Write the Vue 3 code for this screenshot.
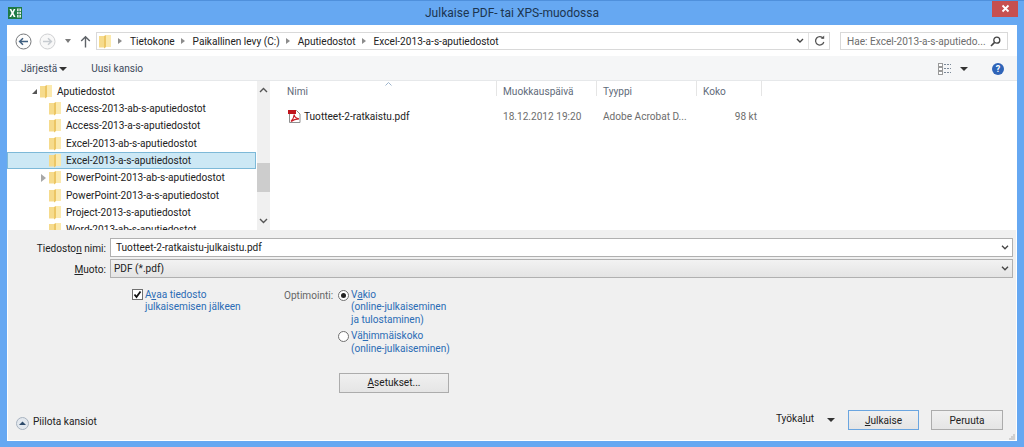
<template>
  <div class="window">
    <header class="titlebar">
      <svg class="app-icon" width="14" height="12" viewBox="0 0 14 12">
        <rect x="0" y="0" width="14" height="12" fill="#1f7a45" />
        <rect x="9" y="1.5" width="4" height="9" fill="#d8eadf" />
        <path d="M9 4.5h4M9 7.5h4M11 1.5v9" stroke="#1f7a45" stroke-width="0.8" />
        <path d="M1.5 2h1.8l1.2 2.4L5.7 2h1.7L5.5 5.900l2 4.100H5.700L4.400 7.500 3.100 10H1.400l2.100-4.100z" fill="#fff" />
      </svg>
      <span class="title">Julkaise PDF- tai XPS-muodossa</span>
      <button class="close">
        <svg width="9" height="9" viewBox="0 0 9 9"><path d="M1.5 1.5l6 6M7.5 1.5l-6 6" stroke="#fff" stroke-width="1.8" /></svg>
      </button>
    </header>

    <div class="body">
      <nav class="navbar">
        <svg class="nav-btn" width="17" height="17" viewBox="0 0 17 17">
          <circle cx="8.5" cy="8.5" r="7.5" fill="#fdfdfd" stroke="#77797c" />
          <path d="M13 8.5H5M8 5.2L4.6 8.5 8 11.8" fill="none" stroke="#3f5f80" stroke-width="1.5" />
        </svg>
        <svg class="nav-btn" width="17" height="17" viewBox="0 0 17 17">
          <circle cx="8.5" cy="8.5" r="7.5" fill="#f8f8f8" stroke="#cfd0d2" />
          <path d="M4 8.5h8M9 5.2l3.4 3.3L9 11.8" fill="none" stroke="#c6cbd0" stroke-width="1.5" />
        </svg>
        <span class="tri small nav-tri"></span>
        <svg class="up" width="11" height="13" viewBox="0 0 11 13">
          <path d="M5.5 12.5V2M1.2 6l4.3-4.3L9.8 6" fill="none" stroke="#5f6368" stroke-width="1.4" />
        </svg>
        <div class="address">
          <svg class="folder addr-folder" width="12" height="15" viewBox="0 0 12 15">
            <path d="M0 2h5v11.5H0z" fill="#f6db8c" />
            <path d="M5 2l2-1v12l-2 1.5z" fill="#ecc665" />
            <path d="M7 1h5v12H7z" fill="#fbe9ad" />
          </svg>
          <template v-for="c in crumbs" :key="c">
            <span class="crumb-arrow"></span>
            <span class="crumb">{{ c }}</span>
          </template>
          <svg class="addr-drop" width="8" height="6" viewBox="0 0 8 6"><path d="M1 1l3 3 3-3" fill="none" stroke="#444" stroke-width="1.4" /></svg>
          <span class="addr-refresh">
            <svg width="11" height="12" viewBox="0 0 11 12">
              <path d="M9.2 3.4A4.2 4.2 0 1 0 9.8 7" fill="none" stroke="#555" stroke-width="1.3" />
              <path d="M6.8 3.8h3.4V0.6z" fill="#555" />
            </svg>
          </span>
        </div>
        <div class="search">
          <span class="search-text">Hae: Excel-2013-a-s-aputiedo...</span>
          <svg width="11" height="11" viewBox="0 0 11 11">
            <circle cx="6.8" cy="4.2" r="3" fill="none" stroke="#444" stroke-width="1.3" />
            <path d="M4.6 6.4L1 10" stroke="#444" stroke-width="1.6" />
          </svg>
        </div>
      </nav>

      <div class="toolbar">
        <span class="tool">Järjestä</span>
        <span class="tri"></span>
        <span class="tool new-folder">Uusi kansio</span>
        <span class="spacer"></span>
        <svg class="views" width="13" height="12" viewBox="0 0 13 12">
          <rect x="0.5" y="0.5" width="4" height="3" fill="#fff" stroke="#9a9a9a" />
          <rect x="0.5" y="4.5" width="4" height="3" fill="#fff" stroke="#9a9a9a" />
          <rect x="0.5" y="8.5" width="4" height="3" fill="#fff" stroke="#9a9a9a" />
          <path d="M6 1.5h7M6 5.5h7M6 9.5h7" stroke="#7d8a99" stroke-dasharray="2 1" />
        </svg>
        <span class="tri views-tri"></span>
        <span class="help">?</span>
      </div>

      <div class="browser">
        <div class="tree">
          <div class="tree-rows">
            <div v-for="row in rows" :key="row.name" :class="['tree-row', { selected: row.selected, root: row.root }]">
              <span v-if="row.root" class="expanded"></span>
              <span v-if="row.closed" class="collapsed"></span>
              <svg class="folder" width="12" height="15" viewBox="0 0 12 15">
                <path d="M0 2h5v11.5H0z" fill="#f6db8c" />
                <path d="M5 2l2-1v12l-2 1.5z" fill="#ecc665" />
                <path d="M7 1h5v12H7z" fill="#fbe9ad" />
              </svg>
              <span class="tree-label">{{ row.name }}</span>
            </div>
          </div>
        </div>
        <div class="scrollbar">
          <svg width="9" height="6" viewBox="0 0 9 6"><path d="M1 5l3.5-3.5L8 5" fill="none" stroke="#555" stroke-width="1.4" /></svg>
          <div class="track"><div class="thumb"></div></div>
          <svg width="9" height="6" viewBox="0 0 9 6"><path d="M1 1l3.5 3.5L8 1" fill="none" stroke="#555" stroke-width="1.4" /></svg>
        </div>
        <div class="files">
          <div class="file-head">
            <span class="col first">Nimi<svg class="sort" width="7" height="4" viewBox="0 0 7 4"><path d="M0.5 3.5l3-3 3 3" fill="none" stroke="#9db4cc" /></svg></span>
            <span class="col">Muokkauspäivä</span>
            <span class="col">Tyyppi</span>
            <span class="col">Koko</span>
          </div>
          <div class="file-row">
            <span class="file-name">
              <svg class="pdf" width="13" height="13" viewBox="0 0 13 13">
                <path d="M1.5 0.5h7l3.5 3.5v8.5H1.5z" fill="#fff" stroke="#8f8f8f" />
                <rect x="0" y="0" width="8" height="4" fill="#c0141d" />
                <path d="M3 11.5c2-2 3-4 3.2-7 .2 2.500 2 4 4.800 4.300-3.200 0-5.800.8-8 2.700z" fill="none" stroke="#c8202a" stroke-width="1.2" />
              </svg>
              Tuotteet-2-ratkaistu.pdf
            </span>
            <span class="meta">18.12.2012 19:20</span>
            <span class="meta">Adobe Acrobat D...</span>
            <span class="meta size">98 kt</span>
          </div>
        </div>
      </div>

      <div class="form">
        <div class="field">
          <label>Tiedosto<u>n</u> nimi:</label>
          <div class="input">Tuotteet-2-ratkaistu-julkaistu.pdf
            <svg class="chev" width="8" height="5" viewBox="0 0 8 5"><path d="M1 0.8l3 3 3-3" fill="none" stroke="#444" stroke-width="1.3" /></svg>
          </div>
        </div>
        <div class="field">
          <label><u>M</u>uoto:</label>
          <div class="input select">PDF (*.pdf)
            <svg class="chev" width="8" height="5" viewBox="0 0 8 5"><path d="M1 0.8l3 3 3-3" fill="none" stroke="#444" stroke-width="1.3" /></svg>
          </div>
        </div>

        <div class="options">
          <div class="open-after">
            <span class="checkbox">
              <svg width="9" height="9" viewBox="0 0 9 9"><path d="M1.5 4.5l2 2.5L7.500 1.500" fill="none" stroke="#111" stroke-width="1.8" /></svg>
            </span>
            <span class="blue">A<u>v</u>aa tiedosto<br />julkaisemisen jälkeen</span>
          </div>
          <div class="optimize">
            <span class="opt-label">Optimointi:</span>
            <div class="opt-col">
              <div class="radio-line">
                <span class="radio on"></span>
                <span class="blue">V<u>a</u>kio<br />(online-julkaiseminen<br />ja tulostaminen)</span>
              </div>
              <div class="radio-line second">
                <span class="radio"></span>
                <span class="blue">Vä<u>h</u>immäiskoko<br />(online-julkaiseminen)</span>
              </div>
              <button class="btn settings"><u>A</u>setukset...</button>
            </div>
          </div>
        </div>

        <div class="footer">
          <svg class="hide-icon" width="13" height="13" viewBox="0 0 13 13">
            <circle cx="6.5" cy="6.5" r="6" fill="#e3e8ee" stroke="#a7b2bf" />
            <path d="M3 8l3.5-3.5L10 8z" fill="#2d4a6a" />
          </svg>
          <span class="hide-label">Piilota kansiot</span>
          <span class="spacer"></span>
          <span class="tools">Työka<u>l</u>ut</span>
          <span class="tri tools-tri"></span>
          <button class="btn primary"><u>J</u>ulkaise</button>
          <button class="btn cancel">Peruuta</button>
          <svg class="grip" width="6" height="6" viewBox="0 0 6 6">
            <path d="M4 0h2v2H4zM2 2h2v2H2zM4 2h2v2H4zM0 4h2v2H0zM2 4h2v2H2zM4 4h2v2H4z" fill="#c2c2c2" fill-opacity="0.7" />
          </svg>
        </div>
      </div>
    </div>
  </div>
</template>

<script setup>
const crumbs = ['Tietokone', 'Paikallinen levy (C:)', 'Aputiedostot', 'Excel-2013-a-s-aputiedostot']

const rows = [
  { name: 'Aputiedostot', root: true },
  { name: 'Access-2013-ab-s-aputiedostot' },
  { name: 'Access-2013-a-s-aputiedostot' },
  { name: 'Excel-2013-ab-s-aputiedostot' },
  { name: 'Excel-2013-a-s-aputiedostot', selected: true },
  { name: 'PowerPoint-2013-ab-s-aputiedostot', closed: true },
  { name: 'PowerPoint-2013-a-s-aputiedostot' },
  { name: 'Project-2013-s-aputiedostot' },
  { name: 'Word-2013-ab-s-aputiedostot' }
]
</script>

<style>
html, body {
  margin: 0;
  overflow: hidden;
}
</style>

<style scoped>
.window {
  width: 1024px;
  height: 447px;
  box-sizing: border-box;
  padding: 0 7px 6px;
  background: #66a8f2;
  border-top: 1px solid #4f90dc;
  display: flex;
  flex-direction: column;
  font-family: Roboto, "Noto Sans", sans-serif;
  font-size: 10.1px;
  color: #222;
  overflow: hidden;
}

.titlebar {
  height: 24px;
  flex: none;
  display: flex;
  align-items: center;
  justify-content: center;
  position: relative;
}
.app-icon {
  position: absolute;
  left: 1px;
  top: 6px;
}
.title {
  font-size: 12px;
  color: #1c3550;
}
.close {
  position: absolute;
  right: -1px;
  top: -1px;
  width: 26px;
  height: 17px;
  border: 0;
  padding: 0;
  background: #c75050;
  display: flex;
  align-items: center;
  justify-content: center;
}

.body {
  flex: 1;
  display: flex;
  flex-direction: column;
  background: #f0f0f0;
  min-height: 0;
}

.navbar {
  height: 31px;
  flex: none;
  background: #fff;
  display: flex;
  align-items: center;
  padding: 1px 9px 0 8px;
  box-sizing: border-box;
}
.nav-btn {
  margin-right: 7px;
}
.nav-btn + .nav-btn {
  margin-right: 0;
}
.tri {
  width: 0;
  height: 0;
  border-left: 4px solid transparent;
  border-right: 4px solid transparent;
  border-top: 4px solid #333;
  display: inline-block;
}
.tri.small {
  border-top-color: #7a7a7a;
  border-left-width: 3px;
  border-right-width: 3px;
}
.nav-tri {
  margin-left: 9px;
}
.up {
  margin-left: 9px;
}
.address {
  margin-left: 5px;
  width: 734px;
  height: 18px;
  box-sizing: border-box;
  border: 1px solid #d9d9d9;
  display: flex;
  align-items: center;
  padding-left: 2px;
}
.addr-folder {
  margin-right: 5px;
}
.crumb-arrow {
  width: 0;
  height: 0;
  border-left: 4px solid #8c8c8c;
  border-top: 3px solid transparent;
  border-bottom: 3px solid transparent;
  margin: 0 8px 0 2px;
}
.crumb {
  margin-right: 4px;
}
.addr-drop {
  margin-left: auto;
  margin-right: 4px;
}
.addr-refresh {
  width: 20px;
  height: 16px;
  border-left: 1px solid #e2e2e2;
  display: flex;
  align-items: center;
  justify-content: center;
}
.search {
  margin-left: 10px;
  width: 168px;
  height: 18px;
  box-sizing: border-box;
  border: 1px solid #d9d9d9;
  display: flex;
  align-items: center;
  justify-content: space-between;
  padding: 0 6px;
  color: #6d6d6d;
}
.search-text {
  white-space: nowrap;
}

.toolbar {
  height: 25px;
  flex: none;
  background: #f5f6f7;
  border-bottom: 1px solid #e6e8ea;
  box-sizing: border-box;
  display: flex;
  align-items: center;
  padding: 1px 13px 0 14px;
  color: #3d4a5a;
}
.toolbar .tri {
  margin-left: 2px;
}
.new-folder {
  margin-left: 24px;
}
.spacer {
  flex: 1;
}
.toolbar .views-tri {
  margin-left: 9px;
}
.help {
  margin-left: 24px;
  width: 12px;
  height: 12px;
  border-radius: 50%;
  background: #2f64b8;
  color: #fff;
  font-size: 9px;
  font-weight: 700;
  line-height: 12px;
  text-align: center;
}

.browser {
  height: 149px;
  flex: none;
  display: flex;
  background: #fff;
}
.tree {
  width: 250px;
  overflow: hidden;
}
.tree-rows {
  padding-top: 1.5px;
}
.tree-row {
  height: 17.35px;
  box-sizing: border-box;
  position: relative;
  padding-left: 42px;
  display: flex;
  align-items: center;
  border: 1px solid transparent;
  border-left: 0;
}
.tree-row.root {
  padding-left: 33px;
}
.tree-row.selected {
  background: #cce8f5;
  border: 1px solid #7db9d8;
  padding-left: 41px;
  width: 249px;
}
.folder {
  flex: none;
}
.tree-label {
  margin-left: 5px;
  white-space: nowrap;
}
.expanded {
  position: absolute;
  left: 25px;
  top: 5px;
  width: 0;
  height: 0;
  border-left: 5px solid transparent;
  border-bottom: 5px solid #555;
}
.collapsed {
  position: absolute;
  left: 34px;
  top: 4px;
  width: 0;
  height: 0;
  border-left: 5px solid #a8a8a8;
  border-top: 4px solid transparent;
  border-bottom: 4px solid transparent;
}
.scrollbar {
  width: 13px;
  background: #f0f0f0;
  display: flex;
  flex-direction: column;
  align-items: center;
  padding: 6px 0;
  box-sizing: border-box;
}
.track {
  flex: 1;
  width: 100%;
  padding-top: 70px;
  box-sizing: border-box;
}
.thumb {
  height: 29px;
  background: #cdcdcd;
}

.files {
  flex: 1;
  color: #6d6d6d;
}
.file-head,
.file-row {
  display: grid;
  grid-template-columns: 227px 100px 100px 65px;
}
.file-head {
  height: 15px;
}
.col {
  border-right: 1px solid #e5e5e5;
  padding-left: 6px;
  line-height: 21px;
  height: 15px;
  box-sizing: border-box;
  color: #5f6b7a;
  position: relative;
}
.col.first {
  padding-left: 17px;
}
.sort {
  position: absolute;
  left: 115px;
  top: 1px;
}
.file-row {
  margin-top: 12px;
  height: 17px;
  align-items: center;
}
.file-name {
  display: flex;
  align-items: center;
  gap: 3px;
  padding-left: 18px;
  color: #222;
}
.meta {
  padding-left: 6px;
}
.size {
  padding: 0 5px 0 0;
  text-align: right;
}

.form {
  flex: 1;
  display: flex;
  flex-direction: column;
  padding-top: 8px;
  position: relative;
  box-shadow: inset 1px 0 #fff, inset -1px 0 #fff, inset 0 -1px #fff;
}
.field {
  display: flex;
  align-items: center;
  height: 19px;
  margin-bottom: 2px;
}
.field label {
  width: 99px;
  text-align: right;
  padding-top: 1px;
}
.input {
  margin-left: 4px;
  width: 903px;
  height: 19px;
  box-sizing: border-box;
  border: 1px solid #b0b0b0;
  background: #fff;
  display: flex;
  align-items: center;
  padding-left: 5px;
  position: relative;
}
.select {
  background: linear-gradient(#f2f2f2, #e4e4e4);
  padding-left: 3px;
}
.chev {
  position: absolute;
  right: 3px;
  top: 6px;
}

.options {
  display: flex;
  padding: 8.5px 0 0 125px;
}
.open-after {
  width: 152px;
  display: flex;
  align-items: flex-start;
  line-height: 12.6px;
}
.checkbox {
  width: 11px;
  height: 11px;
  box-sizing: border-box;
  flex: none;
  border: 1px solid #707070;
  background: #fff;
  margin-right: 2px;
  display: block;
}
.checkbox svg {
  display: block;
}
.blue {
  color: #2b6cb5;
}
.optimize {
  display: flex;
  align-items: flex-start;
  line-height: 12.6px;
}
.opt-label {
  width: 54px;
  color: #666;
  padding-top: 1px;
}
.radio-line {
  display: flex;
  align-items: flex-start;
}
.radio-line.second {
  margin-top: 4px;
}
.radio {
  width: 11px;
  height: 11px;
  box-sizing: border-box;
  border: 1px solid #707070;
  border-radius: 50%;
  background: #fff;
  margin: 1px 2px 0 0;
  flex: none;
  position: relative;
}
.radio.on::after {
  content: "";
  position: absolute;
  left: 2px;
  top: 2px;
  width: 5px;
  height: 5px;
  border-radius: 50%;
  background: #222;
}
.btn {
  font: inherit;
  color: #222;
  height: 20px;
  padding: 0;
  border: 1px solid #acacac;
  background: linear-gradient(#f0f0f0, #e5e5e5);
}
.settings {
  display: block;
  width: 110px;
  margin: 18px 0 0 1px;
}

.footer {
  position: absolute;
  left: 0;
  right: 0;
  bottom: 0;
  height: 40px;
  display: flex;
  align-items: flex-start;
  padding: 9px 14px 0 9px;
  box-sizing: border-box;
}
.hide-icon {
  margin-top: 7px;
}
.hide-label {
  margin: 6px 0 0 4px;
}
.tools {
  margin-top: 3px;
}
.tools-tri {
  margin: 8px 0 0 13px;
}
.primary {
  width: 71px;
  margin-left: 13px;
  border-color: #6aa5e0;
}
.cancel {
  width: 72px;
  margin-left: 12px;
}
.grip {
  position: absolute;
  right: 2px;
  bottom: 1px;
}
</style>
